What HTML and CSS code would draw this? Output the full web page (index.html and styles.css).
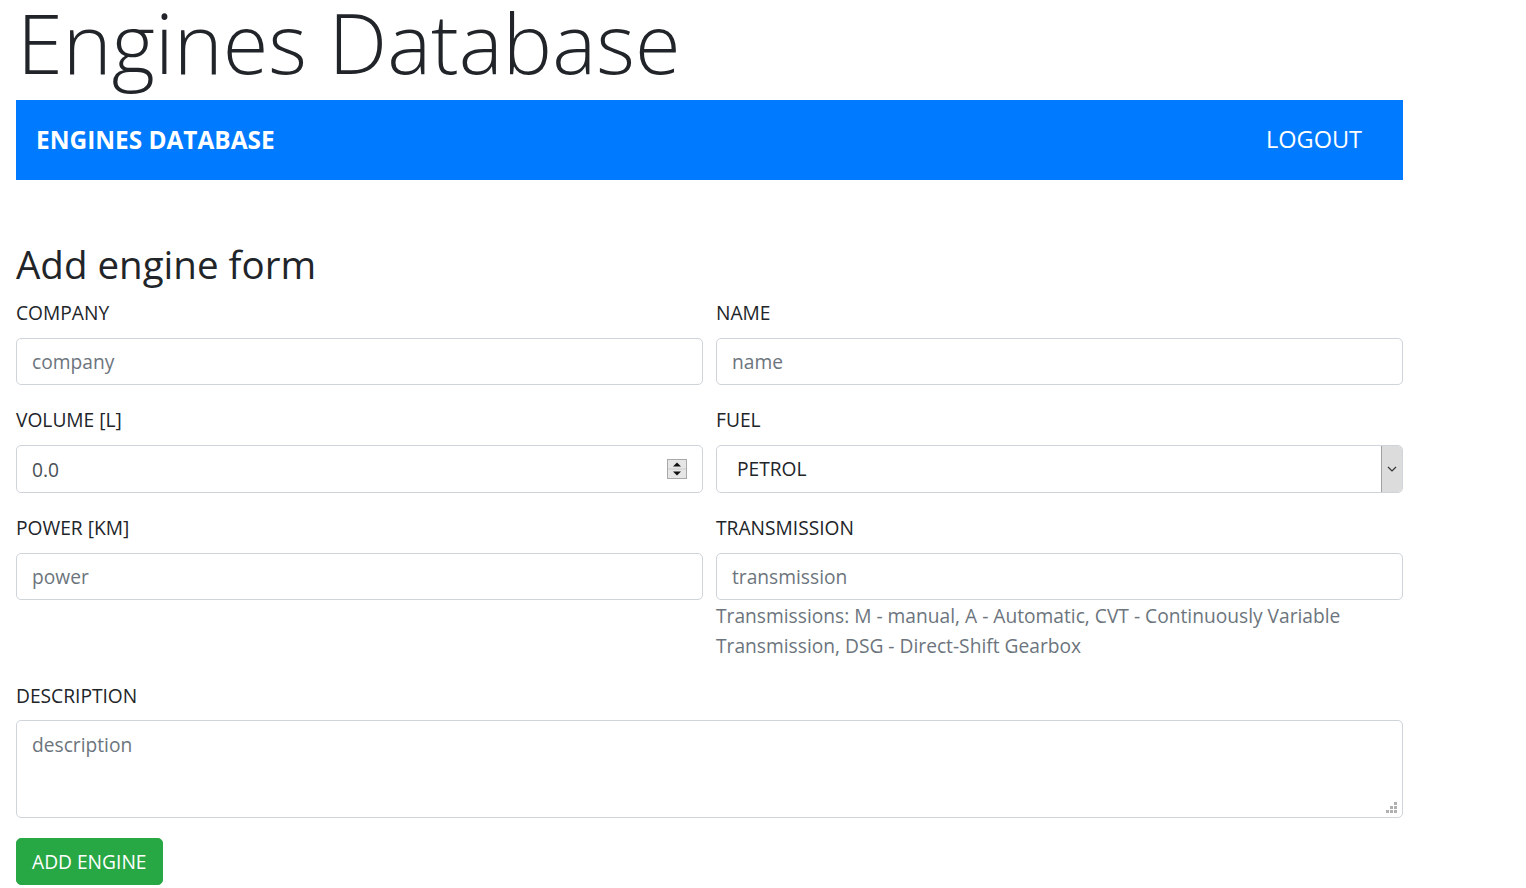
FILE: index.html
```html
<!DOCTYPE html>
<html lang="en">
<head>
<meta charset="utf-8">
<title>Engines Database</title>
<link rel="stylesheet" href="styles.css">
</head>
<body>
<div class="page">
  <h1 class="display">Engines Database</h1>
  <nav class="navbar">
    <a class="brand" href="#">ENGINES DATABASE</a>
    <a class="nav-link" href="#">LOGOUT</a>
  </nav>
  <main class="content">
    <h2 class="form-title">Add engine form</h2>
    <form class="engine-form">
      <div class="form-grid">
        <div class="field">
          <label class="field-label">COMPANY</label>
          <input class="control" type="text" placeholder="company">
        </div>
        <div class="field">
          <label class="field-label">NAME</label>
          <input class="control" type="text" placeholder="name">
        </div>
        <div class="field">
          <label class="field-label">VOLUME [L]</label>
          <div class="control-wrap">
            <input class="control" type="text" value="0.0">
            <svg class="spinner" width="20" height="20" viewBox="0 0 20 20">
              <rect x="0.5" y="0.5" width="19" height="19" fill="#f0f0f0" stroke="#a9a9a9"/>
              <line x1="1" y1="10" x2="19" y2="10" stroke="#a9a9a9"/>
              <rect x="1" y="1" width="18" height="8.5" fill="#e6e6e6"/>
              <rect x="1" y="10.5" width="18" height="8.5" fill="#e6e6e6"/>
              <polygon points="10,3.5 14,7.5 6,7.5" fill="#111"/>
              <polygon points="6,12.5 14,12.5 10,16.5" fill="#111"/>
            </svg>
          </div>
        </div>
        <div class="field">
          <label class="field-label">FUEL</label>
          <div class="control-wrap">
            <select class="control select">
              <option>PETROL</option>
              <option>DIESEL</option>
              <option>LPG</option>
            </select>
            <span class="select-arrow">
              <svg width="10" height="6" viewBox="0 0 10 6"><polyline points="1,1 5,5 9,1" fill="none" stroke="#333" stroke-width="1.2"/></svg>
            </span>
          </div>
        </div>
        <div class="field">
          <label class="field-label">POWER [KM]</label>
          <input class="control" type="text" placeholder="power">
        </div>
        <div class="field">
          <label class="field-label">TRANSMISSION</label>
          <input class="control" type="text" placeholder="transmission">
          <small class="help">Transmissions: M - manual, A - Automatic, CVT - Continuously Variable Transmission, DSG - Direct-Shift Gearbox</small>
        </div>
      </div>
      <div class="field">
        <label class="field-label field-label-desc">DESCRIPTION</label>
        <div class="control-wrap">
          <textarea class="control textarea" placeholder="description"></textarea>
          <svg class="grip" width="12" height="12" viewBox="0 0 12 12">
            <rect x="8" y="0" width="3" height="3" fill="#b0b0b0"/>
            <rect x="4" y="4" width="3" height="3" fill="#b0b0b0"/>
            <rect x="8" y="4" width="3" height="3" fill="#b0b0b0"/>
            <rect x="0" y="8" width="3" height="3" fill="#b0b0b0"/>
            <rect x="4" y="8" width="3" height="3" fill="#b0b0b0"/>
            <rect x="8" y="8" width="3" height="3" fill="#b0b0b0"/>
          </svg>
        </div>
      </div>
      <button class="btn-success" type="button">ADD ENGINE</button>
    </form>
  </main>
</div>
</body>
</html>
```
FILE: styles.css
```css
* { box-sizing: border-box; }

html, body {
  margin: 0;
  padding: 0;
  background: #fff;
}

body {
  font-family: "Open Sans", "Noto Sans", "Liberation Sans", sans-serif;
  font-size: 19.2px;
  line-height: 1.5;
  color: #212529;
}

.page {
  width: 1419px;
  padding: 0 16px;
}

.display {
  margin: 0;
  font-size: 83px;
  font-weight: 300;
  line-height: 1;
  color: #212529;
  padding-left: 1px;
}

.navbar {
  margin-top: 17px;
  height: 80px;
  background: #007bff;
  display: flex;
  align-items: center;
  justify-content: space-between;
  padding: 0 41px 0 20px;
}

.brand {
  color: #fff;
  text-decoration: none;
  font-weight: 700;
  font-size: 24.4px;
}

.nav-link {
  color: #fff;
  text-decoration: none;
  font-size: 23.5px;
}

.content {
  padding-top: 60px;
}

.form-title {
  margin: 0 0 10px 0;
  font-size: 38.5px;
  font-weight: 400;
  line-height: 48px;
}

.form-grid {
  display: grid;
  grid-template-columns: 687px 687px;
  column-gap: 13px;
}

.field {
  margin-bottom: 20px;
  display: flex;
  flex-direction: column;
}

.field-label {
  display: block;
  margin-bottom: 10px;
  line-height: 30px;
}

.field-label-desc {
  margin-bottom: 9px;
}

.control-wrap {
  position: relative;
}

.control {
  display: block;
  width: 100%;
  height: 47px;
  padding: 7px 15px;
  font-family: inherit;
  font-size: 19.2px;
  line-height: 30px;
  color: #495057;
  background: #fff;
  border: 1px solid #ced4da;
  border-radius: 5px;
  outline: none;
}

.control::placeholder {
  color: #6c757d;
  opacity: 1;
}

.control-wrap .control {
  height: 48px;
}

.spinner {
  position: absolute;
  right: 16px;
  top: 14px;
}

.select {
  appearance: none;
  -webkit-appearance: none;
  padding-left: 20px;
  color: #212529;
}

.select-arrow {
  position: absolute;
  right: 1px;
  top: 1px;
  bottom: 1px;
  width: 21px;
  background: #dcdcdc;
  border-left: 1px solid #a0a0a0;
  border-radius: 0 4px 4px 0;
  display: flex;
  align-items: center;
  justify-content: center;
}

.help {
  display: block;
  margin-top: 1px;
  font-size: 19.2px;
  line-height: 30px;
  color: #6c757d;
}

.textarea {
  height: 98px !important;
  resize: none;
  padding-top: 9px;
}

.grip {
  position: absolute;
  right: 5px;
  bottom: 4px;
}

.btn-success {
  display: inline-block;
  height: 47px;
  padding: 0 15px;
  font-family: inherit;
  font-size: 19.2px;
  line-height: 30px;
  color: #fff;
  background: #28a745;
  border: 1px solid #28a745;
  border-radius: 5px;
  cursor: pointer;
}
```
